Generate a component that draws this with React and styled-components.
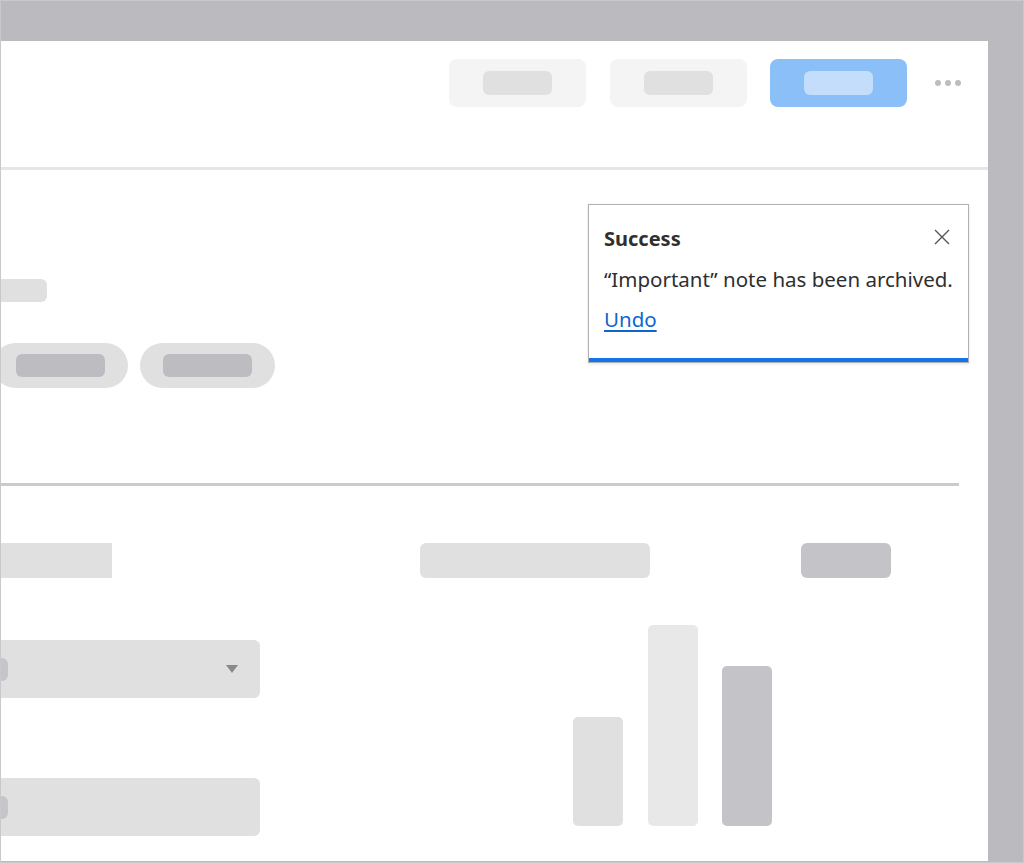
import React from "react";
import styled, { createGlobalStyle } from "styled-components";

const Global = createGlobalStyle`
  html, body { margin: 0; padding: 0; background: #bbbbbf; }
  * { box-sizing: border-box; }
`;

const Frame = styled.div`
  width: 1024px;
  height: 863px;
  background: #bbbbbf;
  border: 1px solid #c9c9cd;
  padding: 40px 35px 1px 0;
  display: flex;
`;

const Panel = styled.div`
  position: relative;
  flex: 1;
  background: #ffffff;
  overflow: hidden;
  display: flex;
  flex-direction: column;
`;

const Header = styled.header`
  height: 129px;
  border-bottom: 3px solid #e6e6e6;
  display: flex;
  justify-content: flex-end;
  align-items: flex-start;
  padding: 18px 27px 0 0;
`;

const Actions = styled.div`
  display: flex;
  align-items: center;
  gap: 23.5px;
`;

const Button = styled.div`
  width: 137px;
  height: 48px;
  border-radius: 8px;
  background: ${(p) => (p.$primary ? "#8bbff8" : "#f4f4f4")};
  display: flex;
  align-items: center;
  justify-content: center;
`;

const ButtonLabel = styled.div`
  width: 69px;
  height: 24px;
  border-radius: 6px;
  background: ${(p) => (p.$primary ? "#c3ddfa" : "#e0e0e0")};
`;

const More = styled.div`
  display: flex;
  gap: 4px;
  margin-left: 4.5px;
`;

const Dot = styled.span`
  width: 6px;
  height: 6px;
  border-radius: 50%;
  background: #bdbdc1;
`;

const Top = styled.section`
  height: 313px;
  padding-top: 109px;
  display: flex;
  flex-direction: column;
  align-items: flex-start;
`;

const TitleBar = styled.div`
  width: 70px;
  height: 23px;
  margin-left: -24px;
  border-radius: 6px;
  background: #e0e0e0;
`;

const Tags = styled.div`
  display: flex;
  gap: 12px;
  margin-top: 41px;
  margin-left: -8px;
`;

const Tag = styled.div`
  height: 45px;
  padding: 0 23px;
  border-radius: 23px;
  background: #e0e0e0;
  display: flex;
  align-items: center;
`;

const TagLabel = styled.div`
  width: 89px;
  height: 23px;
  border-radius: 6px;
  background: #bdbcc0;
`;

const Divider = styled.hr`
  margin: 0 29px 0 0;
  border: 0;
  height: 3px;
  background: #cbcbcf;
`;

const Row = styled.div`
  display: flex;
  margin-top: 57px;
  height: 35px;
`;

const Block = styled.div`
  height: 35px;
  width: ${(p) => p.$w}px;
  margin-left: ${(p) => p.$ml || 0}px;
  border-radius: ${(p) => (p.$square ? 0 : 6)}px;
  background: ${(p) => (p.$dark ? "#c4c4c8" : "#e0e0e0")};
`;

const Lower = styled.div`
  display: flex;
  align-items: flex-start;
`;

const Fields = styled.div`
  display: flex;
  flex-direction: column;
  gap: 80px;
  margin-top: 62px;
  margin-left: -41px;
  width: 300px;
`;

const Field = styled.div`
  height: 58px;
  border-radius: 6px;
  background: #e0e0e0;
  display: flex;
  align-items: center;
  justify-content: space-between;
  padding: 0 22px 0 16px;
`;

const FieldValue = styled.div`
  width: 32px;
  height: 23px;
  border-radius: 6px;
  background: #c6c6ca;
`;

const Caret = styled.div`
  width: 0;
  height: 0;
  border-left: 6.5px solid transparent;
  border-right: 6.5px solid transparent;
  border-top: 8px solid #8a8a8e;
`;

const Chart = styled.div`
  display: flex;
  align-items: flex-end;
  gap: 24.5px;
  height: 201px;
  margin-top: 47px;
  margin-left: 313px;
`;

const Bar = styled.div`
  width: 50px;
  border-radius: 5px;
  background: ${(p) => p.$color};
`;

const Toast = styled.div`
  position: absolute;
  left: 587px;
  top: 163px;
  width: 381px;
  height: 159px;
  background: #ffffff;
  border: 1px solid #b1b1b5;
  box-shadow: 0 1px 3px rgba(0, 0, 0, 0.12);
  padding: 14px 16px 0 15px;
  font-family: "Noto Sans", "Lato", sans-serif;
  font-size: 20.5px;
  line-height: 40px;
  color: #2f2f2f;
  &::after {
    content: "";
    position: absolute;
    left: 0;
    right: 0;
    bottom: 0;
    height: 4px;
    background: #1473e6;
  }
`;

const ToastTitle = styled.div`
  font-weight: 700;
  font-size: 20px;
`;

const ToastText = styled.div`
  white-space: nowrap;
`;

const Undo = styled.a`
  color: #0d66d0;
  text-decoration: underline;
  text-underline-offset: 3px;
  cursor: pointer;
`;

const Close = styled.button`
  position: absolute;
  top: 24px;
  right: 17px;
  width: 18px;
  height: 16px;
  padding: 0;
  border: 0;
  background: none;
  display: flex;
  align-items: center;
  justify-content: center;
`;

export default function App() {
  return (
    <>
      <Global />
      <Frame>
        <Panel>
          <Header>
            <Actions>
              <Button><ButtonLabel /></Button>
              <Button><ButtonLabel /></Button>
              <Button $primary><ButtonLabel $primary /></Button>
              <More>
                <Dot />
                <Dot />
                <Dot />
              </More>
            </Actions>
          </Header>
          <Top>
            <TitleBar />
            <Tags>
              <Tag><TagLabel /></Tag>
              <Tag><TagLabel /></Tag>
            </Tags>
          </Top>
          <Divider />
          <Row>
            <Block $w={111} $square />
            <Block $w={230} $ml={308} />
            <Block $w={90} $ml={151} $dark />
          </Row>
          <Lower>
            <Fields>
              <Field>
                <FieldValue />
                <Caret />
              </Field>
              <Field>
                <FieldValue />
              </Field>
            </Fields>
            <Chart>
              <Bar $color="#e0e0e0" style={{ height: 109 }} />
              <Bar $color="#e8e8e8" style={{ height: 201 }} />
              <Bar $color="#c4c4c8" style={{ height: 160 }} />
            </Chart>
          </Lower>
          <Toast role="status">
            <ToastTitle>Success</ToastTitle>
            <ToastText>“Important” note has been archived.</ToastText>
            <Undo>Undo</Undo>
            <Close aria-label="Close">
              <svg width="18" height="16" viewBox="0 0 18 16" fill="none">
                <path d="M2 1 L16 15 M16 1 L2 15" stroke="#555" strokeWidth="1.4" />
              </svg>
            </Close>
          </Toast>
        </Panel>
      </Frame>
    </>
  );
}
